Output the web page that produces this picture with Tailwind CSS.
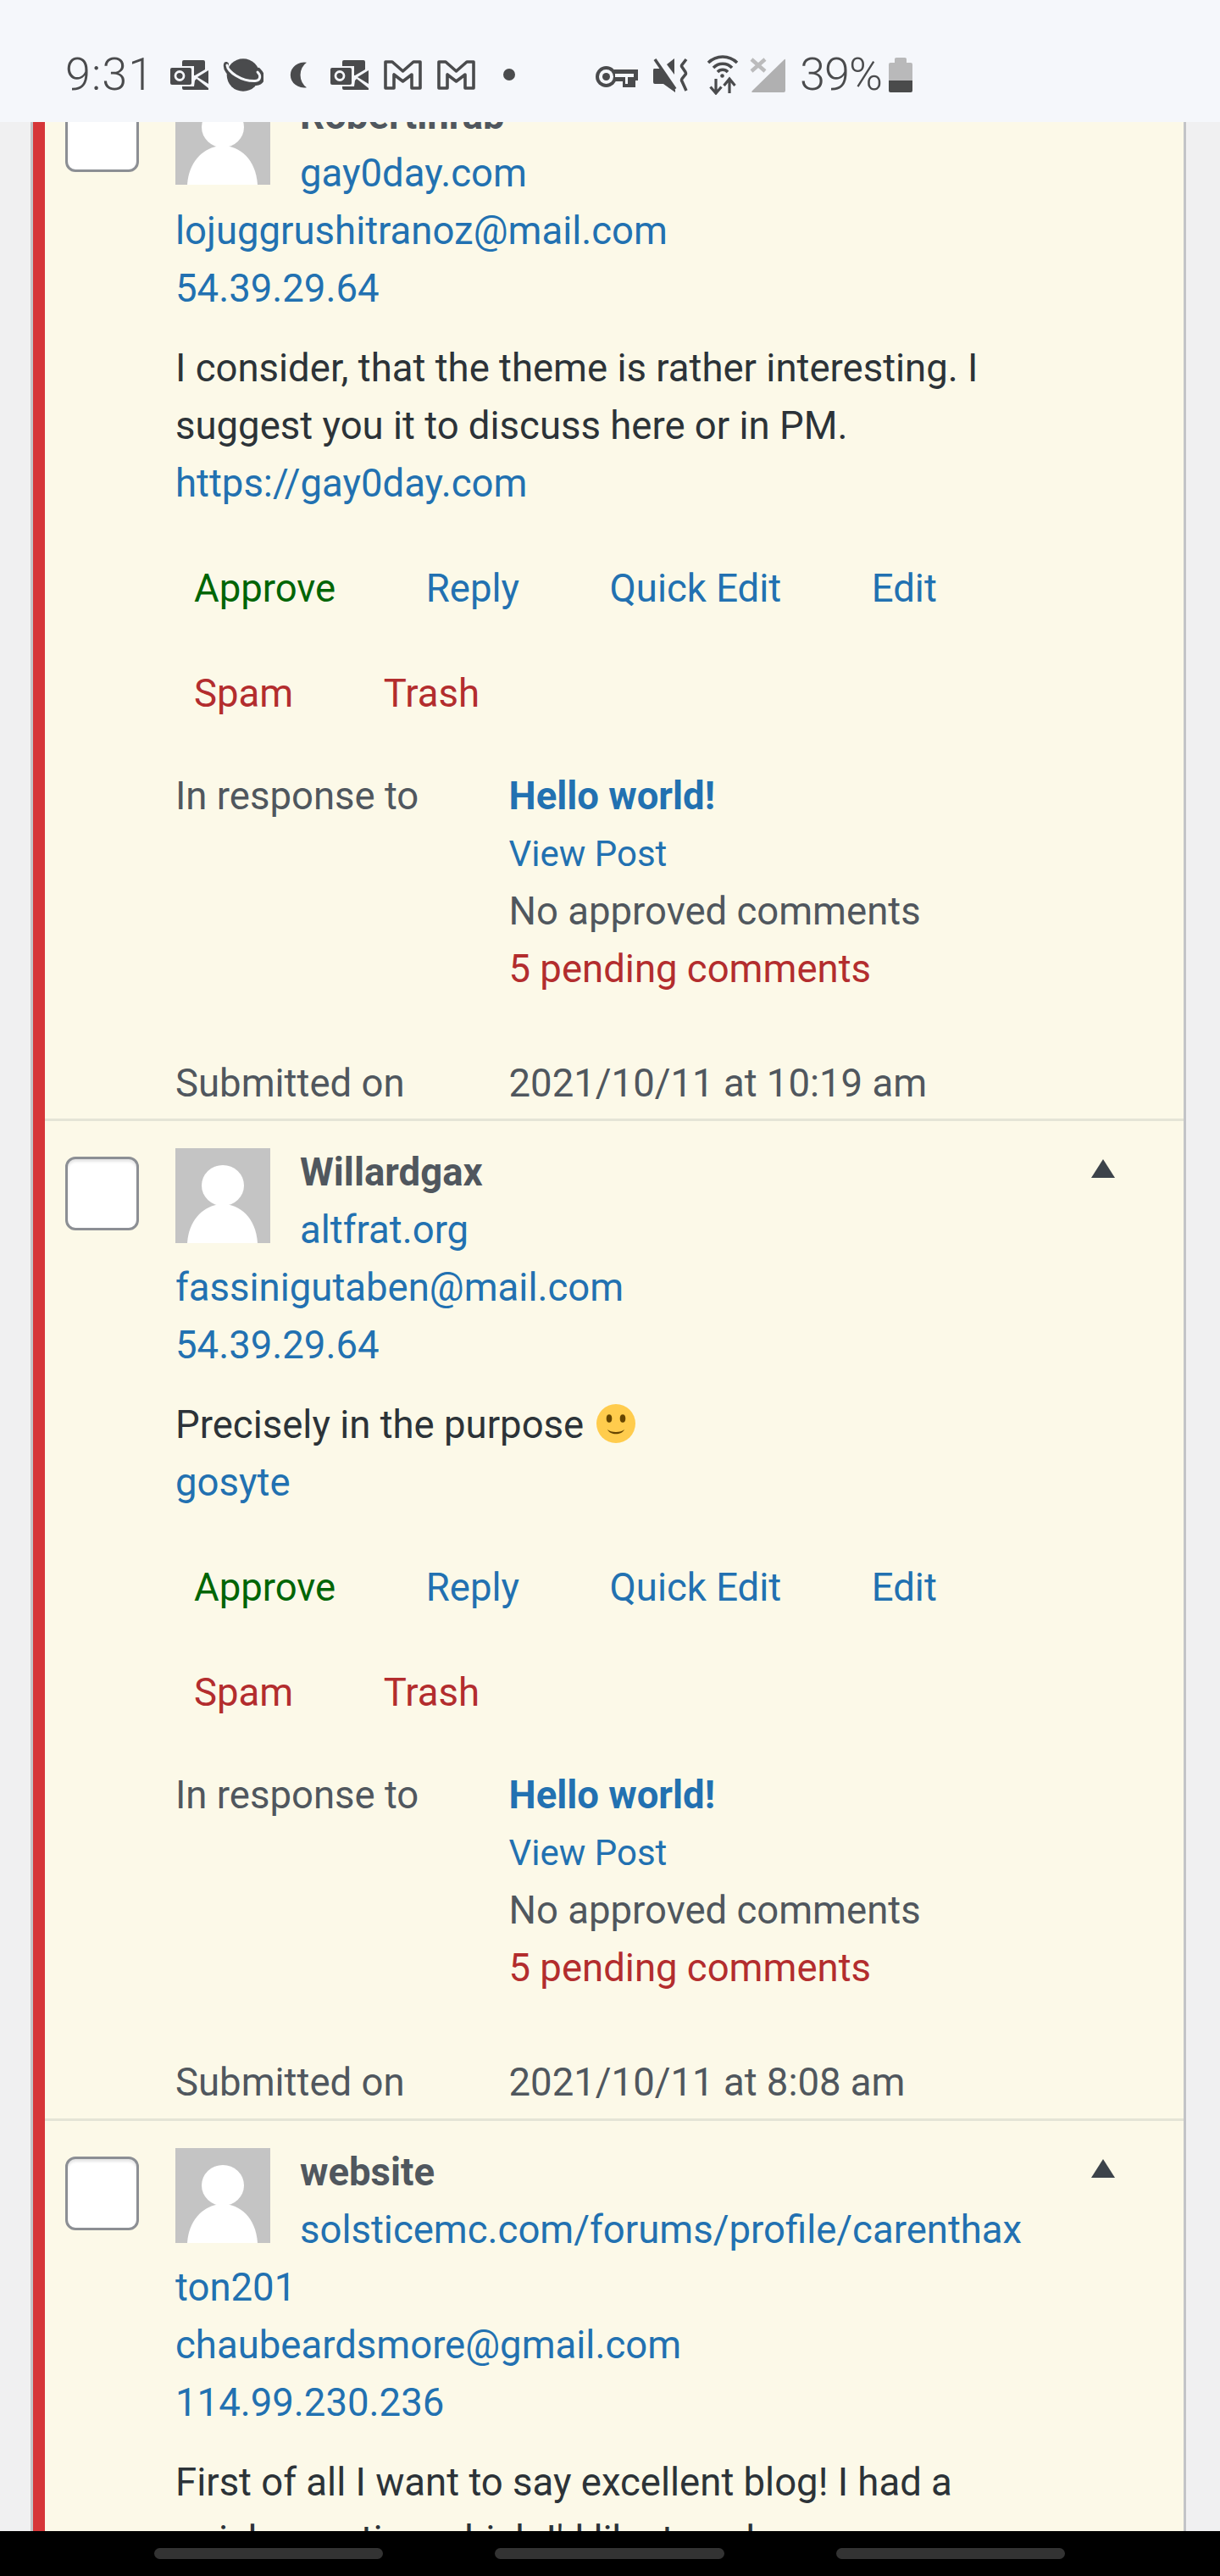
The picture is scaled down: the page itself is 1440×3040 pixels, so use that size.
<!DOCTYPE html>
<html><head><meta charset="utf-8"><script src="https://cdn.jsdelivr.net/npm/@tailwindcss/browser@4"></script></head>
<body class="m-0">
<div class="relative w-[1440px] h-[3040px] overflow-hidden bg-[#f0f0f1] font-['Roboto',sans-serif] text-[45.5px] leading-[68px] text-[#50575e]">
  <!-- status bar -->
  <header class="absolute inset-x-0 top-0 h-[144px] z-10 bg-[#f5f7fb] flex items-center pt-[32px] text-[#4a4b4d]">
    <span class="ml-[77px] w-[124px] text-[54px] font-light leading-none whitespace-nowrap tracking-[1px]">9:31</span>
    <svg class="w-[45px] h-[35px]" viewBox="0 0 45 35" fill="#4a4b4d"><path d="M14 2a2 2 0 0 1 2-2h23a2 2 0 0 1 2 2v9L29 18h-1V7H14z"/><path d="M45 12v16L32 20z"/><path d="M14 31h14l1-7 2-2 14 11v2H16a2 2 0 0 1-2-2z"/><rect x="0" y="9" width="25" height="20" rx="2"/><circle cx="11" cy="18.500" r="5" fill="none" stroke="#f5f7fb" stroke-width="2.800"/></svg>
    <svg class="ml-[17px] w-[48px] h-[39px]" viewBox="0 0 48 39" fill="#4a4b4d"><circle cx="24" cy="19.500" r="19.300"/><path d="M4 7C2 16 20 30 39 29C48 28 48 20 42 14" fill="none" stroke="#4a4b4d" stroke-width="6" stroke-linecap="round"/><path d="M5 8C6 16 22 27 38 26.500C45 26 45 20 41 16" fill="none" stroke="#f5f7fb" stroke-width="3" stroke-linecap="round"/></svg>
    <svg class="ml-[29px] w-[22px] h-[31px]" viewBox="0 0 22 31" fill="#4a4b4d"><path d="M22 .8A16 15 0 1 0 22 30.200A15 17 0 0 1 22 .8z"/></svg>
    <svg class="ml-[28px] w-[45px] h-[35px]" viewBox="0 0 45 35" fill="#4a4b4d"><path d="M14 2a2 2 0 0 1 2-2h23a2 2 0 0 1 2 2v9L29 18h-1V7H14z"/><path d="M45 12v16L32 20z"/><path d="M14 31h14l1-7 2-2 14 11v2H16a2 2 0 0 1-2-2z"/><rect x="0" y="9" width="25" height="20" rx="2"/><circle cx="11" cy="18.500" r="5" fill="none" stroke="#f5f7fb" stroke-width="2.800"/></svg>
    <svg class="ml-[18px] w-[45px] h-[35px]" viewBox="0 0 45 35" fill="none" stroke="#4a4b4d" stroke-width="3.600" stroke-linejoin="round"><path d="M2 2H10L22.500 13L35 2H43V33H33V17L22.500 25L12 17V33H2Z"/></svg>
    <svg class="ml-[18px] w-[45px] h-[35px]" viewBox="0 0 45 35" fill="none" stroke="#4a4b4d" stroke-width="3.600" stroke-linejoin="round"><path d="M2 2H10L22.500 13L35 2H43V33H33V17L22.500 25L12 17V33H2Z"/></svg>
    <span class="ml-[33px] w-[14px] h-[14px] rounded-full bg-[#4a4b4d]"></span>
    <svg class="ml-[95px] mt-[5px] w-[50px] h-[25px]" viewBox="0 0 50 25" fill="#4a4b4d"><circle cx="12.500" cy="12.500" r="12.500"/><circle cx="12.500" cy="12.500" r="8.500" fill="#f5f7fb"/><circle cx="12.500" cy="12.500" r="4.500"/><path d="M22 4H50V17H47V25H32V18H22z"/><path d="M23 9H45V13H38V21H35V13H23z" fill="#f5f7fb"/></svg>
    <svg class="ml-[17px] w-[43px] h-[41px]" viewBox="0 0 43 41" fill="#4a4b4d"><path d="M26 1V20L17 8z"/><path d="M2 13H9L27 38V41L13 31H3Q1 31 1 29V15Q1 13 2 13z"/><path d="M3 2L27 37" stroke="#4a4b4d" stroke-width="3.500" fill="none"/><path d="M40 2L35 8.500Q34 10 35 11L39 17Q40 19 39 20L35 25Q34 27 35 28L40 39" fill="none" stroke="#4a4b4d" stroke-width="3.500"/></svg>
    <svg class="ml-[21px] w-[38px] h-[48px]" viewBox="0 0 38 48" fill="none" stroke="#4a4b4d"><path d="M2 10A24 24 0 0 1 36 10" stroke-width="3.500"/><path d="M8 16A15 15 0 0 1 30 16" stroke-width="3.500"/><path d="M13 21A8 8 0 0 1 25 21" stroke-width="3.500"/><circle cx="18.500" cy="25.500" r="2.300" fill="#4a4b4d" stroke="none"/><path d="M11 29V45M4.500 38.500L11 46L17.500 38.500" stroke-width="3.200"/><path d="M27 46V30M20.500 37L27 29L33.500 37" stroke-width="3.200"/></svg>
    <svg class="ml-[13px] w-[42px] h-[41px]" viewBox="0 0 42 41" fill="#b0b0b1"><path d="M41 2Q42 1 42 3V39Q42 41 40 41H4Q1 41 3 39z"/><path d="M2 2L18 16M18 2L2 16" stroke="#bbbbbc" stroke-width="4.500" fill="none"/></svg>
    <span class="ml-[17px] w-[105px] text-[54px] font-light leading-none whitespace-nowrap tracking-[-1px]">39%</span>
    <svg class="w-[28px] h-[41px]" viewBox="0 0 28 41"><path d="M7 6V1.500Q7 0 9 0H19Q21 0 21 1.500V6H26Q28 6 28 8V27H0V8Q0 6 2 6z" fill="#b9b9ba"/><path d="M0 27H28V39Q28 41 26 41H2Q0 41 0 39z" fill="#4a4b4b"/></svg>
  </header>
  <!-- nav bar -->
  <footer class="absolute inset-x-0 top-[2987px] h-[53px] z-10 bg-black flex gap-[132px] pl-[182px] pt-[20px]">
    <span class="w-[270px] h-[13px] rounded-full bg-[#333333]"></span>
    <span class="w-[271px] h-[13px] rounded-full bg-[#333333]"></span>
    <span class="w-[270px] h-[13px] rounded-full bg-[#333333]"></span>
  </footer>

  <main class="ml-[36px] mr-[40px] mt-[74px] border-l-[3px] border-r-[3px] border-[#c3c4c7]">
    <div class="border-l-[14px] border-[#d63638] bg-[#fcf9e8]">

      <!-- row 1 -->
      <section class="relative border-b-[3px] border-[#e4e4d6] pl-[154px] pt-[29px] pb-[7px]">
        <div class="absolute left-[24px] top-[42px] w-[87px] h-[87px] bg-white border-[3px] border-[#8c8f94] rounded-[12px] shadow-[inset_0_3px_3px_rgba(0,0,0,0.1)]"></div>
        <svg class="absolute right-[81px] top-[45px] w-[28px] h-[22px]" viewBox="0 0 28 22" fill="#3c434a"><path d="M14 0L28 22H0z"/></svg>
        <div class="w-[1009px]">
          <svg class="float-left w-[112px] h-[112px] mt-[3px] mr-[35px]" viewBox="0 0 112 112"><rect width="112" height="112" fill="#c4c4c4"/><ellipse cx="56" cy="44" rx="25" ry="24" fill="#fff"/><path d="M14 112C16 82 36 66 56 66C76 66 95 82 97 112Z" fill="#fff"/></svg>
          <div class="font-bold">Robertinrab</div>
          <div class="text-[#2271b1]">gay0day.com</div>
          <div class="text-[#2271b1]">lojuggrushitranoz@mail.com</div>
          <div class="text-[#2271b1]">54.39.29.64</div>
          <p class="mt-[26px] text-[#2c3338]">I consider, that the theme is rather interesting. I suggest you it to discuss here or in PM.<br><span class="text-[#2271b1]">https://gay0day.com</span></p>
          <div class="mt-[56px] pl-[22px] flex flex-wrap gap-x-[106.5px] gap-y-[56px] text-[#2271b1]">
            <span class="text-[#006505]">Approve</span><span>Reply</span><span>Quick Edit</span><span>Edit</span>
            <span class="text-[#b32d2e]">Spam</span><span class="text-[#b32d2e]">Trash</span>
          </div>
          <div class="mt-[53px] grid grid-cols-[393.5px_1fr]">
            <div>In response to</div>
            <div>
              <div class="font-bold text-[#2271b1]">Hello world!</div>
              <div class="text-[#2271b1] text-[42px]">View Post</div>
              <div>No approved comments</div>
              <div class="text-[#b32d2e]">5 pending comments</div>
            </div>
          </div>
          <div class="mt-[67px] grid grid-cols-[393.5px_1fr]"><div>Submitted on</div><div>2021/10/11 at 10:19 am</div></div>
        </div>
      </section>

      <!-- row 2 -->
      <section class="relative border-b-[3px] border-[#e4e4d6] pl-[154px] pt-[27px] pb-[8px]">
        <div class="absolute left-[24px] top-[42px] w-[87px] h-[87px] bg-white border-[3px] border-[#8c8f94] rounded-[12px] shadow-[inset_0_3px_3px_rgba(0,0,0,0.1)]"></div>
        <svg class="absolute right-[81px] top-[45px] w-[28px] h-[22px]" viewBox="0 0 28 22" fill="#3c434a"><path d="M14 0L28 22H0z"/></svg>
        <div class="w-[1009px]">
          <svg class="float-left w-[112px] h-[112px] mt-[5px] mr-[35px]" viewBox="0 0 112 112"><rect width="112" height="112" fill="#c4c4c4"/><ellipse cx="56" cy="44" rx="25" ry="24" fill="#fff"/><path d="M14 112C16 82 36 66 56 66C76 66 95 82 97 112Z" fill="#fff"/></svg>
          <div class="font-bold">Willardgax</div>
          <div class="text-[#2271b1]">altfrat.org</div>
          <div class="text-[#2271b1]">fassinigutaben@mail.com</div>
          <div class="text-[#2271b1]">54.39.29.64</div>
          <p class="mt-[26px] text-[#2c3338]">Precisely in the purpose <svg class="inline-block w-[46px] h-[46px] ml-[4px] align-[-6px]" viewBox="0 0 46 46"><circle cx="23" cy="23" r="23" fill="#ffcc4d"/><ellipse cx="15" cy="17" rx="3.300" ry="4.800" fill="#664500"/><ellipse cx="31" cy="17" rx="3.300" ry="4.800" fill="#664500"/><path d="M13 30C17 34 29 34 33 30C30 37 16 37 13 30z" fill="#664500"/></svg><br><span class="text-[#2271b1]">gosyte</span></p>
          <div class="mt-[56px] pl-[22px] flex flex-wrap gap-x-[106.5px] gap-y-[56px] text-[#2271b1]">
            <span class="text-[#006505]">Approve</span><span>Reply</span><span>Quick Edit</span><span>Edit</span>
            <span class="text-[#b32d2e]">Spam</span><span class="text-[#b32d2e]">Trash</span>
          </div>
          <div class="mt-[53px] grid grid-cols-[393.5px_1fr]">
            <div>In response to</div>
            <div>
              <div class="font-bold text-[#2271b1]">Hello world!</div>
              <div class="text-[#2271b1] text-[42px]">View Post</div>
              <div>No approved comments</div>
              <div class="text-[#b32d2e]">5 pending comments</div>
            </div>
          </div>
          <div class="mt-[67px] grid grid-cols-[393.5px_1fr]"><div>Submitted on</div><div>2021/10/11 at 8:08 am</div></div>
        </div>
      </section>

      <!-- row 3 -->
      <section class="relative pl-[154px] pt-[27px] pb-[11px]">
        <div class="absolute left-[24px] top-[42px] w-[87px] h-[87px] bg-white border-[3px] border-[#8c8f94] rounded-[12px] shadow-[inset_0_3px_3px_rgba(0,0,0,0.1)]"></div>
        <svg class="absolute right-[81px] top-[45px] w-[28px] h-[22px]" viewBox="0 0 28 22" fill="#3c434a"><path d="M14 0L28 22H0z"/></svg>
        <div class="w-[1012px]">
          <svg class="float-left w-[112px] h-[112px] mt-[5px] mr-[35px]" viewBox="0 0 112 112"><rect width="112" height="112" fill="#c4c4c4"/><ellipse cx="56" cy="44" rx="25" ry="24" fill="#fff"/><path d="M14 112C16 82 36 66 56 66C76 66 95 82 97 112Z" fill="#fff"/></svg>
          <div class="font-bold">website</div>
          <div class="text-[#2271b1] break-all">solsticemc.com/forums/profile/carenthaxton201</div>
          <div class="text-[#2271b1]">chaubeardsmore@gmail.com</div>
          <div class="text-[#2271b1]">114.99.230.236</div>
          <p class="mt-[26px] text-[#2c3338]">First of all I want to say excellent blog! I had a<br>quick question which I'd like to ask</p>
        </div>
      </section>
    </div>
  </main>
</div>
</body></html>
